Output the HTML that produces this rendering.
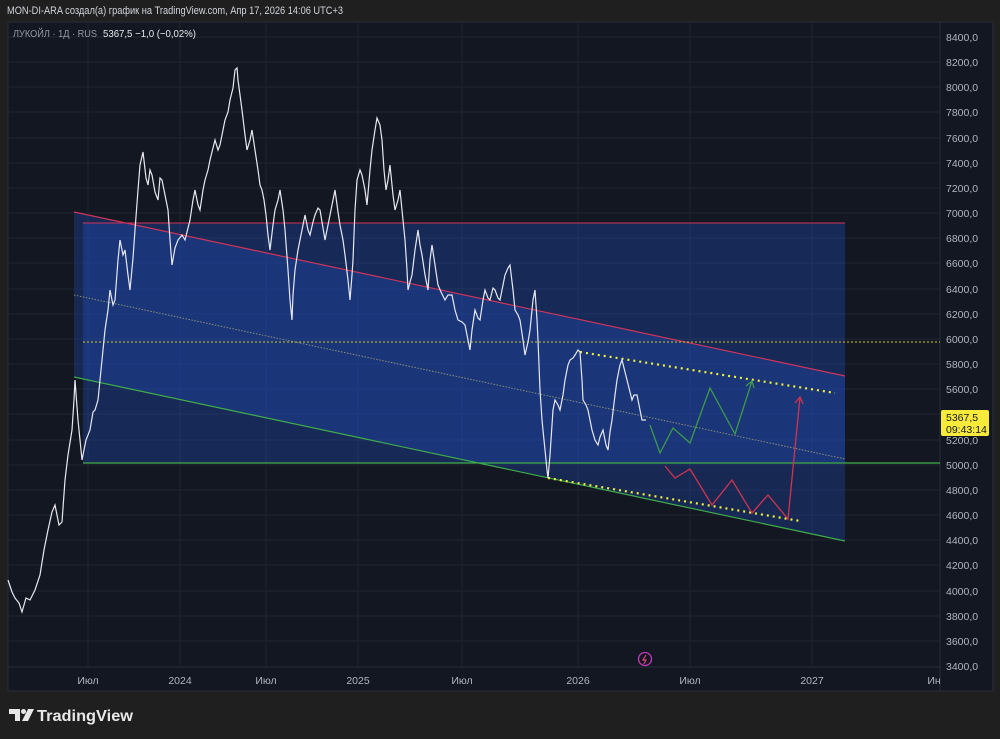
<!DOCTYPE html>
<html><head><meta charset="utf-8"><style>
html,body{margin:0;padding:0;background:#1f1f1f;width:1000px;height:739px;overflow:hidden;font-family:"Liberation Sans","Noto Sans CJK SC",sans-serif}
</style></head><body>
<svg width="1000" height="739" viewBox="0 0 1000 739" xmlns="http://www.w3.org/2000/svg" font-family="Liberation Sans, DejaVu Sans, sans-serif">
<rect x="0" y="0" width="1000" height="739" fill="#1f1f1f"/>
<text x="7" y="14" fill="#d1d4dc" font-size="11" textLength="336" lengthAdjust="spacingAndGlyphs">MON-DI-ARA создал(а) график на TradingView.com, Апр 17, 2026 14:06 UTC+3</text>
<rect x="8" y="22" width="985" height="669" fill="#131722" stroke="#2a2e39" stroke-width="1"/>
<g stroke="#1f2430" stroke-width="1">
<line x1="88" y1="22" x2="88" y2="667"/><line x1="180" y1="22" x2="180" y2="667"/><line x1="266" y1="22" x2="266" y2="667"/><line x1="358" y1="22" x2="358" y2="667"/><line x1="462" y1="22" x2="462" y2="667"/><line x1="578" y1="22" x2="578" y2="667"/><line x1="690" y1="22" x2="690" y2="667"/><line x1="812" y1="22" x2="812" y2="667"/>
<line x1="8" y1="37" x2="940" y2="37"/><line x1="8" y1="62" x2="940" y2="62"/><line x1="8" y1="87" x2="940" y2="87"/><line x1="8" y1="112" x2="940" y2="112"/><line x1="8" y1="138" x2="940" y2="138"/><line x1="8" y1="163" x2="940" y2="163"/><line x1="8" y1="188" x2="940" y2="188"/><line x1="8" y1="213" x2="940" y2="213"/><line x1="8" y1="238" x2="940" y2="238"/><line x1="8" y1="263" x2="940" y2="263"/><line x1="8" y1="289" x2="940" y2="289"/><line x1="8" y1="314" x2="940" y2="314"/><line x1="8" y1="339" x2="940" y2="339"/><line x1="8" y1="364" x2="940" y2="364"/><line x1="8" y1="389" x2="940" y2="389"/><line x1="8" y1="414" x2="940" y2="414"/><line x1="8" y1="440" x2="940" y2="440"/><line x1="8" y1="465" x2="940" y2="465"/><line x1="8" y1="490" x2="940" y2="490"/><line x1="8" y1="515" x2="940" y2="515"/><line x1="8" y1="540" x2="940" y2="540"/><line x1="8" y1="565" x2="940" y2="565"/><line x1="8" y1="591" x2="940" y2="591"/><line x1="8" y1="616" x2="940" y2="616"/><line x1="8" y1="641" x2="940" y2="641"/>
</g>
<line x1="940" y1="22" x2="940" y2="691" stroke="#2a2e39"/>
<line x1="8" y1="667" x2="940" y2="667" stroke="#2a2e39"/>
<polygon points="74,212 845,376 845,541 74,377" fill="rgb(33,80,200)" fill-opacity="0.3"/>
<rect x="83" y="223" width="762" height="240" fill="rgb(33,80,200)" fill-opacity="0.32"/>
<line x1="83" y1="223" x2="845" y2="223" stroke="#d0345a" stroke-width="1"/>
<line x1="83" y1="463" x2="940" y2="463" stroke="#3fae4a" stroke-width="1.3"/>
<line x1="74" y1="212" x2="845" y2="376" stroke="#d0345a" stroke-width="1.2"/>
<line x1="74" y1="377" x2="845" y2="541" stroke="#3fae4a" stroke-width="1.2"/>
<line x1="74" y1="295" x2="845" y2="459" stroke="#8a8f7a" stroke-width="1" stroke-dasharray="1.5,1.5"/>
<line x1="83" y1="342" x2="940" y2="342" stroke="#d4c82a" stroke-width="1" stroke-dasharray="2,2"/>
<line x1="580" y1="352" x2="835" y2="393" stroke="#f2f23a" stroke-width="2.2" stroke-dasharray="2,4"/>
<line x1="548" y1="478" x2="800" y2="521" stroke="#f2f23a" stroke-width="2.2" stroke-dasharray="2,4"/>
<polyline fill="none" stroke="#e8e8f0" stroke-width="1.2" points="8,580 12,592 15,598 19,603 22,612 26,598 30,600 35,590 40,575 44,550 48,530 52,512 55,505 59,525 62,522 65,480 68,455 72,430 74,400 75,380 78,420 80,440 82,460 86,440 90,430 93,412 95,410 98,400 100,380 103,350 105,330 108,310 110,290 113,305 115,300 118,260 120,240 123,255 125,250 128,275 130,290 133,258 135,230 138,190 140,165 143,152 146,178 148,185 150,170 152,175 155,192 158,200 160,178 162,180 165,195 168,210 170,240 172,265 175,248 178,240 182,235 185,240 188,228 190,220 193,200 195,190 198,205 200,210 203,190 205,180 208,170 210,160 213,148 215,140 218,150 220,145 223,130 225,120 228,112 230,100 233,88 235,70 237,68 238,80 240,95 242,110 245,135 247,150 250,140 252,130 255,150 258,170 260,185 262,190 264,200 266,215 268,235 270,250 273,225 275,210 278,200 280,190 283,210 285,230 288,270 290,300 292,320 293,295 295,270 298,250 300,240 303,225 305,215 308,230 310,235 313,222 315,215 318,208 320,210 323,228 325,240 328,225 330,215 333,200 335,190 338,212 340,225 343,240 345,255 348,280 350,300 352,275 353,260 355,210 357,180 360,170 362,175 365,190 367,205 370,170 372,150 375,130 377,118 380,125 382,140 384,170 386,190 388,180 390,165 393,195 395,210 398,200 400,190 402,210 405,240 407,270 408,290 410,282 412,275 415,250 418,230 420,245 422,255 425,275 428,290 430,260 432,245 435,265 438,285 441,292 445,300 448,295 452,295 455,310 458,320 462,322 465,325 468,340 470,350 472,330 475,310 478,318 480,320 483,300 485,290 488,298 490,300 493,288 495,290 498,298 500,300 503,285 505,275 508,268 510,265 513,290 515,310 518,315 520,320 523,340 525,355 528,342 530,330 533,300 535,290 537,320 538,340 540,390 542,420 544,440 545,450 547,470 548,478 550,455 551,440 553,410 555,400 558,405 560,410 563,395 565,380 568,365 570,360 573,358 575,355 578,350 580,352 582,380 583,400 586,405 588,410 590,420 592,430 595,440 598,445 600,437 603,430 606,445 608,450 610,432 612,420 615,395 617,380 620,365 622,360 625,372 627,380 630,392 632,400 634,395 637,395 640,410 642,420 646,420"/>
<polyline fill="none" stroke="#3f9a4a" stroke-width="1.3" points="650,425 660,453 673,428 690,443 710,388 735,434 752,381"/>
<polyline fill="none" stroke="#3f9a4a" stroke-width="1.3" points="746,386 752,381 754,388"/>
<polyline fill="none" stroke="#d0344f" stroke-width="1.3" points="665,466 675,478 690,469 712,505 732,480 752,513 768,495 788,519 800,397"/>
<polyline fill="none" stroke="#d0344f" stroke-width="1.3" points="795,403 800,397 803,404"/>
<circle cx="645" cy="659" r="6.5" fill="none" stroke="#c23ab8" stroke-width="1.3"/>
<path d="M646,655 L643,660 L646,660 L644,664" fill="none" stroke="#e0407a" stroke-width="1.2"/>
<text x="13" y="37" fill="#9598a1" font-size="10.5" textLength="84" lengthAdjust="spacingAndGlyphs">ЛУКОЙЛ · 1Д · RUS</text>
<text x="103" y="37" fill="#e8e8ec" font-size="10.5" textLength="93" lengthAdjust="spacingAndGlyphs">5367,5  −1,0 (−0,02%)</text>
<g fill="#b2b5be" font-size="10.5">
<text x="946" y="41">8400,0</text><text x="946" y="66">8200,0</text><text x="946" y="91">8000,0</text><text x="946" y="116">7800,0</text><text x="946" y="142">7600,0</text><text x="946" y="167">7400,0</text><text x="946" y="192">7200,0</text><text x="946" y="217">7000,0</text><text x="946" y="242">6800,0</text><text x="946" y="267">6600,0</text><text x="946" y="293">6400,0</text><text x="946" y="318">6200,0</text><text x="946" y="343">6000,0</text><text x="946" y="368">5800,0</text><text x="946" y="393">5600,0</text><text x="946" y="444">5200,0</text><text x="946" y="469">5000,0</text><text x="946" y="494">4800,0</text><text x="946" y="519">4600,0</text><text x="946" y="544">4400,0</text><text x="946" y="569">4200,0</text><text x="946" y="595">4000,0</text><text x="946" y="620">3800,0</text><text x="946" y="645">3600,0</text><text x="946" y="670">3400,0</text>
</g>
<rect x="941" y="410" width="48" height="26" rx="2" fill="#f7ea3a"/>
<text x="946" y="421" fill="#131722" font-size="10.5">5367,5</text>
<text x="946" y="433" fill="#131722" font-size="10.5">09:43:14</text>
<g fill="#b2b5be" font-size="10.5" text-anchor="middle">
<text x="88" y="684">Июл</text><text x="180" y="684">2024</text><text x="266" y="684">Июл</text><text x="358" y="684">2025</text><text x="462" y="684">Июл</text><text x="578" y="684">2026</text><text x="690" y="684">Июл</text><text x="812" y="684">2027</text><text x="934" y="684">Ин</text>
</g>
<g fill="#e8e8e8">
<path d="M9,709 H20 V721 H15 V714 H9 Z"/>
<circle cx="23.5" cy="711.5" r="2.5"/>
<path d="M28,709 H34 L28,721 H22 Z"/>
</g>
<text x="37" y="721" fill="#e8e8e8" font-size="16" font-weight="bold" textLength="96" lengthAdjust="spacingAndGlyphs">TradingView</text>
</svg>
</body></html>
